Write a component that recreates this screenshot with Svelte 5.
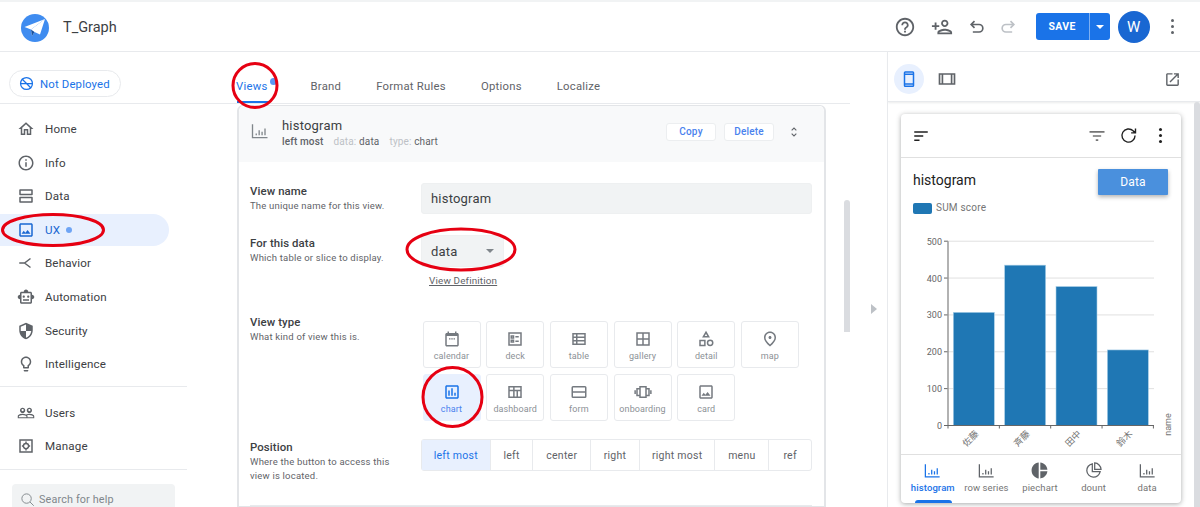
<script>
  const filled = {
    home: "M12 5.69l5 4.5V18h-2v-6H9v6H7v-7.81l5-4.5M12 3L2 12h3v8h6v-6h2v6h6v-8h3L12 3z",
    info: "M11 7h2v2h-2zm0 4h2v6h-2zm1-9C6.48 2 2 6.48 2 12s4.48 10 10 10 10-4.48 10-10S17.52 2 12 2zm0 18c-4.41 0-8-3.59-8-8s3.59-8 8-8 8 3.59 8 8-3.59 8-8 8z",
    data: "M20 13H4c-.55 0-1 .45-1 1v6c0 .55.45 1 1 1h16c.55 0 1-.45 1-1v-6c0-.55-.45-1-1-1zm-1 6H5v-4h14v4zM20 3H4c-.55 0-1 .45-1 1v6c0 .55.45 1 1 1h16c.55 0 1-.45 1-1V4c0-.55-.45-1-1-1zm-1 6H5V5h14v4z",
    image: "M19 5v14H5V5h14m0-2H5c-1.1 0-2 .9-2 2v14c0 1.1.9 2 2 2h14c1.1 0 2-.9 2-2V5c0-1.1-.9-2-2-2zm-4.86 8.86l-3 3.87L9 13.14 6 17h12l-3.86-5.14z",
    robot: "M20 9V7c0-1.1-.9-2-2-2h-3c0-1.66-1.34-3-3-3S9 3.34 9 5H6c-1.1 0-2 .9-2 2v2c-1.66 0-3 1.34-3 3s1.34 3 3 3v4c0 1.1.9 2 2 2h12c1.1 0 2-.9 2-2v-4c1.66 0 3-1.34 3-3s-1.34-3-3-3zm-2 10H6V7h12v12zm-9-6c-.83 0-1.5-.67-1.5-1.5S8.17 10 9 10s1.5.67 1.5 1.5S9.83 13 9 13zm7.5-1.5c0 .83-.67 1.5-1.5 1.5s-1.5-.67-1.5-1.5.67-1.5 1.5-1.5 1.5.67 1.5 1.5zM8 15h8v2H8v-2z",
    shield: "M12 1L3 5v6c0 5.55 3.84 10.74 9 12 5.16-1.26 9-6.45 9-12V5l-9-4zm0 10.99h7c-.53 4.12-3.28 7.79-7 8.94V12H5V6.3l7-3.11v8.8z",
    bulb: "M9 21c0 .55.45 1 1 1h4c.55 0 1-.45 1-1v-1H9v1zm3-19C8.14 2 5 5.14 5 9c0 2.38 1.19 4.47 3 5.74V17c0 .55.45 1 1 1h6c.55 0 1-.45 1-1v-2.26c1.81-1.27 3-3.36 3-5.74 0-3.86-3.14-7-7-7zm2.85 11.1l-.85.6V16h-4v-2.3l-.85-.6C7.8 12.16 7 10.63 7 9c0-2.76 2.24-5 5-5s5 2.24 5 5c0 1.63-.8 3.16-2.15 4.1z",
    users: "M16.5 13c-1.2 0-3.07.34-4.5 1-1.43-.67-3.3-1-4.5-1C5.33 13 1 14.08 1 16.25V19h22v-2.75c0-2.17-4.33-3.25-6.5-3.25zm-4 4.5h-10v-1.25c0-.54 2.56-1.75 5-1.75s5 1.21 5 1.75v1.25zm9 0H14v-1.25c0-.46-.2-.86-.52-1.22.88-.3 1.96-.53 3.02-.53 2.44 0 5 1.21 5 1.75v1.25zM7.5 12c1.93 0 3.5-1.57 3.5-3.5S9.43 5 7.5 5 4 6.57 4 8.5 5.57 12 7.5 12zm0-5.5c.83 0 1.5.67 1.5 1.5s-.67 1.5-1.5 1.5S6 8.83 6 8s.67-1.5 1.5-1.5zm9 5.5c1.93 0 3.5-1.57 3.5-3.5S18.43 5 16.5 5 13 6.57 13 8.5s1.57 3.5 3.5 3.5zm0-5.5c.83 0 1.5.67 1.5 1.5s-.67 1.5-1.5 1.5S15 8.83 15 8s.67-1.5 1.5-1.5z",
    help: "M11 18h2v-2h-2v2zm1-16C6.48 2 2 6.48 2 12s4.48 10 10 10 10-4.48 10-10S17.52 2 12 2zm0 18c-4.41 0-8-3.59-8-8s3.59-8 8-8 8 3.59 8 8-3.59 8-8 8zm0-14c-2.21 0-4 1.79-4 4h2c0-1.1.9-2 2-2s2 .9 2 2c0 2-3 1.75-3 5h2c0-2.25 3-2.5 3-5 0-2.21-1.79-4-4-4z",
    personadd: "M15 12c2.21 0 4-1.79 4-4s-1.79-4-4-4-4 1.79-4 4 1.79 4 4 4zm0-6c1.1 0 2 .9 2 2s-.9 2-2 2-2-.9-2-2 .9-2 2-2zm0 8c-2.67 0-8 1.34-8 4v2h16v-2c0-2.66-5.33-4-8-4zm-6 4c.22-.72 3.31-2 6-2 2.7 0 5.8 1.29 6 2H9zm-3-3v-3h3v-2H6V7H4v3H1v2h3v3z",
    chart: "M19 3H5c-1.1 0-2 .9-2 2v14c0 1.1.9 2 2 2h14c1.1 0 2-.9 2-2V5c0-1.1-.9-2-2-2zm0 16H5V5h14v14zM7 10h2v7H7zm4-3h2v10h-2zm4 6h2v4h-2z",
    map: "M12 12c-1.1 0-2-.9-2-2s.9-2 2-2 2 .9 2 2-.9 2-2 2zm6-1.8C18 6.57 15.35 4 12 4s-6 2.57-6 6.2c0 2.34 1.95 5.44 6 9.14 4.05-3.7 6-6.8 6-9.14zM12 2c4.2 0 8 3.22 8 8.2 0 3.32-2.67 7.25-8 11.8-5.33-4.55-8-8.48-8-11.8C4 5.22 7.8 2 12 2z",
    pie: "M11 2v20c-5.07-.5-9-4.79-9-10s3.93-9.5 9-10zm2.03 0v8.99H22c-.47-4.74-4.24-8.52-8.97-8.99zm0 11.01V22c4.74-.47 8.5-4.25 8.97-8.99h-8.97z",
    calendar: "M19 4h-1V2h-2v2H8V2H6v2H5c-1.1 0-2 .9-2 2v14c0 1.1.9 2 2 2h14c1.1 0 2-.9 2-2V6c0-1.1-.9-2-2-2zm0 16H5V8h14v12zM8 11h2v1.5H8zm3 0h2v1.5h-2zm3 0h2v1.5h-2z",
    external: "M19 19H5V5h7V3H5c-1.11 0-2 .9-2 2v14c0 1.1.89 2 2 2h14c1.1 0 2-.9 2-2v-7h-2v7zM14 3v2h3.59l-9.83 9.83 1.41 1.41L19 6.41V10h2V3h-7z"
  }

  const lined = {
    behavior: "M3 12h7l8-6M10 12l8 6",
    manage: "M4 4h16v16H4zM12 8.5a3.5 3.5 0 1 0 0 7 3.5 3.5 0 0 0 0-7zM12 6v2M12 16v2M6.5 12h2M15.5 12h2",
    undo: "M9 5L5 9l4 4M5 9h9.5a4.5 4.5 0 0 1 0 9H7",
    redo: "M15 5l4 4-4 4M19 9H9.5a4.5 4.5 0 0 0 0 9H17",
    deck: "M4 4h16v16H4zM7 8h3v2.5H7zM7 13.5h3V16H7zM12.5 9H17M12.5 15H17",
    table: "M4 5h16v14H4zM9 5v14M4 9.7h16M4 14.3h16",
    gallery: "M4 4h16v16H4zM12 4v16M4 12h16",
    detail: "M12 3l3.5 6h-7zM4 14h6.5v6.5H4zM17.5 13.5a3.5 3.5 0 1 0 0 7 3.5 3.5 0 0 0 0-7z",
    dashboard: "M4 5h16v14H4zM4 10h16M10.5 5v14M15 10v9",
    form: "M4 5h16a1 1 0 0 1 1 1v12a1 1 0 0 1-1 1H4a1 1 0 0 1-1-1V6a1 1 0 0 1 1-1zM3 12h18",
    onboarding: "M8 5h8v14H8zM4 7.5h4v9H4zM16 7.5h4v9h-4zM1.5 9.5v5M22.5 9.5v5",
    hist: "M3 4v16h18M7.5 17v-2M11 17V11M14.5 17v-4M18 17V9",
    unfold: "M8.5 9.5L12 6l3.5 3.5M8.5 14.5L12 18l3.5-3.5",
    phone: "M7 2.5h10a1 1 0 0 1 1 1v17a1 1 0 0 1-1 1H7a1 1 0 0 1-1-1v-17a1 1 0 0 1 1-1zM6 5.5h12M6 18.5h12",
    tablet: "M3 6h18v12H3zM6.5 6v12M17.5 6v12",
    sort: "M3 6.5h18M3 12h12M3 17.5h7",
    filter: "M3 7h18M7 12h10M10.5 17h3",
    refresh: "M19.5 12a7.5 7.5 0 1 1-2.2-5.3L20 9M20 4v5h-5",
    dount: "M10.5 3.5a8.5 8.5 0 1 0 9.9 9.9h-9.9zM13.5 2.5a8.5 8.5 0 0 1 8 8h-8z"
  }

  const nav = [
    { label: "Home", icon: "home" },
    { label: "Info", icon: "info" },
    { label: "Data", icon: "data" },
    { label: "UX", icon: "image", active: true },
    { label: "Behavior", icon: "behavior" },
    { label: "Automation", icon: "robot" },
    { label: "Security", icon: "shield" },
    { label: "Intelligence", icon: "bulb" }
  ]
  const tabs = ["Views", "Brand", "Format Rules", "Options", "Localize"]
  const viewTypes = [
    ["calendar", "calendar"], ["deck", "deck"], ["table", "table"], ["gallery", "gallery"], ["detail", "detail"], ["map", "map"],
    ["chart", "chart"], ["dashboard", "dashboard"], ["form", "form"], ["onboarding", "onboarding"], ["card", "image"]
  ]
  const positions = [
    ["left most", 69], ["left", 43], ["center", 58], ["right", 49], ["right most", 76], ["menu", 54], ["ref", 42]
  ]
  const ticks = [0, 100, 200, 300, 400, 500]
  const bars = [
    { name: "佐藤", score: 307 },
    { name: "斉藤", score: 435 },
    { name: "田中", score: 377 },
    { name: "鈴木", score: 205 }
  ]
  const bottomTabs = [
    ["histogram", "hist"], ["row series", "hist"], ["piechart", "pie"], ["dount", "dount"], ["data", "hist"]
  ]

  // chart box, coordinates local to the svg
  const y0 = 193.5
  const unit = 184.3 / 500
  const axisX = 47
</script>

{#snippet icon(name, size = 20)}
  <svg class="ic" width={size} height={size} viewBox="0 0 24 24" aria-hidden="true">
    {#if filled[name]}<path d={filled[name]} fill-rule="evenodd" />{/if}
    {#if lined[name]}<path class="line" d={lined[name]} />{/if}
  </svg>
{/snippet}

<div class="page">
  <header>
    <svg class="logo" width="28" height="28" viewBox="0 0 28 28">
      <circle cx="14" cy="14" r="14" fill="#3f8cf0" />
      <path d="M24 5L3.5 13l6.5 2.5z" fill="#fff" />
      <path d="M24 5L10 15.5l1 6.5 2.5-4 5.5 2.5z" fill="#fff" />
      <path d="M10 15.5l1 6.5 2.5-4z" fill="#17509e" />
    </svg>
    <span class="title">T_Graph</span>
    <div class="actions">
      <span class="act">{@render icon("help", 22)}</span>
      <span class="act add">{@render icon("personadd", 22)}</span>
      <span class="act undo">{@render icon("undo", 20)}</span>
      <span class="act off">{@render icon("redo", 20)}</span>
      <div class="save">
        <span class="save-main">SAVE</span>
        <span class="save-drop"><i></i></span>
      </div>
      <span class="avatar">W</span>
      <span class="dots"><i></i><i></i><i></i></span>
    </div>
  </header>

  <div class="body">
    <aside>
      <div class="deploy-row">
        <div class="pill">
          <svg width="15" height="15" viewBox="0 0 24 24" class="pill-ic">
            <circle cx="12" cy="12" r="9.5" />
            <path d="M4.5 4.5l15 15M2 12h20" />
          </svg>
          Not Deployed
        </div>
      </div>
      <nav class="group first">
        {#each nav as item}
          <div class="nav-item" class:active={item.active}>
            <span class="nav-ic">{@render icon(item.icon, 18)}</span>
            <span>{item.label}</span>
            {#if item.active}<i class="dot"></i>{/if}
          </div>
        {/each}
      </nav>
      <nav class="group second">
        <div class="nav-item"><span class="nav-ic">{@render icon("users", 18)}</span><span>Users</span></div>
        <div class="nav-item"><span class="nav-ic">{@render icon("manage", 18)}</span><span>Manage</span></div>
      </nav>
      <div class="search">
        <svg width="15" height="15" viewBox="0 0 24 24" class="search-ic">
          <circle cx="10.5" cy="10.5" r="7.5" />
          <path d="M16 16l6 6" />
        </svg>
        Search for help
      </div>
    </aside>

    <main>
      <div class="tabs">
        {#each tabs as tab, i}
          <div class="tab" class:current={i == 0}>
            {tab}
            {#if i == 0}<i class="tab-dot"></i>{/if}
          </div>
        {/each}
      </div>

      <section class="card">
        <div class="card-head">
          <span class="head-ic">{@render icon("hist", 20)}</span>
          <div class="head-text">
            <div class="head-title">histogram</div>
            <div class="head-sub">
              <b>left most</b>
              <span><em>data:</em> data</span>
              <span><em>type:</em> chart</span>
            </div>
          </div>
          <button class="mini">Copy</button>
          <button class="mini">Delete</button>
          <span class="unfold">{@render icon("unfold", 16)}</span>
        </div>

        <div class="form">
          <div class="row">
            <div class="name-text">
              <div class="label">View name</div>
              <div class="desc">The unique name for this view.</div>
            </div>
            <div class="input">histogram</div>
          </div>

          <div class="row data-row">
            <div class="data-text">
              <div class="label">For this data</div>
              <div class="desc">Which table or slice to display.</div>
            </div>
            <div>
              <div class="input select">data<i></i></div>
              <div class="link">View Definition</div>
            </div>
          </div>

          <div class="row type-row">
            <div>
              <div class="label">View type</div>
              <div class="desc">What kind of view this is.</div>
            </div>
            <div class="types">
              {#each viewTypes as [name, ic]}
                <div class="type" class:sel={name == "chart"}>
                  {@render icon(ic, 18)}
                  <span>{name}</span>
                </div>
              {/each}
            </div>
          </div>

          <div class="row pos-row">
            <div class="pos-text">
              <div class="label">Position</div>
              <div class="desc">Where the button to access this<br />view is located.</div>
            </div>
            <div class="segs">
              {#each positions as [name, w], i}
                <div class="seg" class:on={i == 0} style="width: {w}px">{name}</div>
              {/each}
            </div>
          </div>
          <div class="rule"></div>
        </div>
      </section>

      <div class="scroll"></div>
      <i class="split-arrow"></i>
    </main>

    <div class="right">
      <div class="toolbar">
        <span class="device on">{@render icon("phone", 18)}</span>
        <span class="device">{@render icon("tablet", 20)}</span>
        <span class="ext">{@render icon("external", 17)}</span>
      </div>
      <div class="stage">
        <div class="phone">
          <div class="phone-bar">
            <span class="sort">{@render icon("sort", 18)}</span>
            <span class="filter">{@render icon("filter", 20)}</span>
            <span class="refresh">{@render icon("refresh", 21)}</span>
            <span class="dots dark"><i></i><i></i><i></i></span>
          </div>
          <div class="phone-body">
            <div class="phone-top">
              <div class="phone-title">histogram</div>
              <div class="data-btn">Data</div>
            </div>
            <div class="legend"><i></i>SUM score</div>
            <svg class="chart" width="280" height="222" viewBox="0 0 280 222">
              {#each ticks as t}
                <line class="grid" x1={axisX} x2="253" y1={y0 - t * unit} y2={y0 - t * unit} />
                <line class="axis" x1={axisX - 4} x2={axisX} y1={y0 - t * unit} y2={y0 - t * unit} />
                <text class="tick" x={axisX - 6} y={y0 - t * unit + 3.5} text-anchor="end">{t}</text>
              {/each}
              {#each bars as b, i}
                <rect x={52.3 + i * 51.35} y={y0 - b.score * unit} width="41" height={b.score * unit} fill="#1f77b4" stroke="#a9cfe8" stroke-width="0.6" />
                <line class="axis" x1={axisX + i * 51.35} x2={axisX + i * 51.35} y1={y0} y2={y0 + 3} />
                <text class="cat" text-anchor="end" transform="translate({78 + i * 51.35} {y0 + 9}) rotate(-45)">{b.name}</text>
              {/each}
              <line class="axis" x1={axisX + 205.4} x2={axisX + 205.4} y1={y0} y2={y0 + 3} />
              <line class="axis strong" x1={axisX} x2={axisX} y1={y0 - 184.3} y2={y0} />
              <line class="axis" x1={axisX - 4} x2="253" y1={y0} y2={y0} />
              <text class="cat" text-anchor="middle" transform="translate(270 {y0 - 1}) rotate(-90)">name</text>
            </svg>
          </div>
          <div class="phone-tabs">
            {#each bottomTabs as [name, ic], i}
              <div class="ptab" class:on={i == 0}>
                {@render icon(ic, 19)}
                <span>{name}</span>
                {#if i == 0}<i></i>{/if}
              </div>
            {/each}
          </div>
        </div>
        <div class="stage-scroll"></div>
      </div>
    </div>
  </div>

  <!-- hand drawn red marks over the screenshot -->
  <svg class="marks" width="1200" height="507" viewBox="0 0 1200 507">
    <ellipse cx="255" cy="85.5" rx="22" ry="22" />
    <ellipse cx="53" cy="230" rx="50.5" ry="15.5" />
    <ellipse cx="461" cy="249.5" rx="54" ry="20.5" />
    <ellipse cx="452.5" cy="397" rx="29.5" ry="29.5" />
  </svg>
</div>

<style>
  :global(body) {
    margin: 0;
    background: #fff;
  }
  .page {
    position: relative;
    width: 1200px;
    height: 507px;
    overflow: hidden;
    display: flex;
    flex-direction: column;
    font-family: Roboto, "Noto Sans CJK JP", sans-serif;
    color: #3c4043;
    border-top: 2px solid #f1f3f4;
    box-sizing: border-box;
  }
  i, em {
    font-style: normal;
  }
  .ic {
    display: block;
    fill: currentColor;
  }
  .ic .line {
    fill: none;
    stroke: currentColor;
    stroke-width: var(--sw, 2);
  }

  header {
    height: 49px;
    flex: none;
    display: flex;
    align-items: center;
    padding-left: 21px;
    border-bottom: 1px solid #e8eaed;
  }
  .logo {
    display: block;
    margin-top: 2px;
  }
  .title {
    margin-left: 14px;
    margin-top: 2px;
    font-size: 14.5px;
    color: #3c4043;
  }
  .actions {
    margin-left: auto;
    display: flex;
    align-items: center;
    padding-right: 26px;
    color: #5f6368;
  }
  .act {
    width: 24px;
    display: flex;
    justify-content: center;
    margin-right: 13px;
  }
  .act.add {
    margin-right: 11px;
  }
  .act.undo {
    margin-right: 7px;
  }
  .act.off {
    color: #bdc1c6;
    margin-right: 16px;
  }
  .save {
    display: flex;
    height: 27px;
    width: 74px;
    border-radius: 3px;
    overflow: hidden;
    background: #1a73e8;
    color: #fff;
    font-size: 10.5px;
    font-weight: 700;
    letter-spacing: 0.3px;
  }
  .save-main {
    width: 53px;
    display: flex;
    align-items: center;
    justify-content: center;
    border-right: 1px solid #7fb0f2;
  }
  .save-drop {
    flex: 1;
    display: flex;
    align-items: center;
    justify-content: center;
  }
  .save-drop i {
    border: 4px solid transparent;
    border-top-color: #fff;
    border-bottom: 0;
  }
  .avatar {
    width: 32px;
    height: 32px;
    margin-left: 8px;
    border-radius: 50%;
    background: #1967d2;
    color: #fff;
    display: flex;
    align-items: center;
    justify-content: center;
    font-size: 15px;
  }
  .dots {
    display: flex;
    flex-direction: column;
    gap: 2.4px;
    margin-left: 21px;
  }
  .dots i {
    width: 3.4px;
    height: 3.4px;
    border-radius: 50%;
    background: #5f6368;
  }

  .body {
    flex: 1;
    display: flex;
    min-height: 0;
  }

  aside {
    width: 187px;
    flex: none;
    font-size: 11.6px;
    letter-spacing: 0.15px;
  }
  .deploy-row {
    height: 52px;
    padding: 18px 0 0 9px;
    box-sizing: border-box;
    border-bottom: 1px solid #e8eaed;
  }
  .pill {
    width: 112px;
    height: 27px;
    box-sizing: border-box;
    border: 1px solid #e8eaed;
    border-radius: 14px;
    display: flex;
    align-items: center;
    gap: 6px;
    padding-left: 9px;
    color: #1a73e8;
    font-size: 11.4px;
    white-space: nowrap;
  }
  .pill-ic, .search-ic {
    flex: none;
    fill: none;
    stroke: currentColor;
    stroke-width: 2;
  }
  .group {
    display: flex;
    flex-direction: column;
    gap: 1.6px;
    border-bottom: 1px solid #e8eaed;
  }
  .group.first {
    padding: 9px 0 6px;
  }
  .group.second {
    padding: 9.5px 0 7px;
  }
  .nav-item {
    width: 169px;
    height: 32px;
    box-sizing: border-box;
    display: flex;
    align-items: center;
    padding-left: 17px;
    border-radius: 0 16px 16px 0;
    color: #3c4043;
  }
  .nav-ic {
    width: 18px;
    margin-right: 10px;
    color: #5f6368;
  }
  .nav-item.active {
    background: #e8f0fe;
    color: #1967d2;
  }
  .active .nav-ic {
    color: #1967d2;
  }
  .dot {
    width: 6px;
    height: 6px;
    margin-left: 6px;
    border-radius: 50%;
    background: #6ea4f5;
  }
  .search {
    margin: 14px 0 0 12px;
    width: 163px;
    height: 40px;
    box-sizing: border-box;
    background: #f1f3f4;
    border-radius: 4px;
    display: flex;
    align-items: flex-start;
    gap: 4px;
    padding: 8px 0 0 8px;
    color: #80868b;
    font-size: 10.8px;
    line-height: 15px;
  }
  .search-ic {
    stroke-width: 1.5;
  }

  main {
    position: relative;
    flex: none;
    width: 701px;
    border-right: 1px solid #e8eaed;
    box-sizing: border-box;
    overflow: hidden;
  }
  .tabs {
    padding: 18px 0 0 49px;
    height: 52px;
    box-sizing: border-box;
    width: 663px;
    display: flex;
    gap: 35px;
    align-items: center;
    border-bottom: 1px solid #e8eaed;
    font-size: 11.3px;
    letter-spacing: 0.25px;
    color: #5f6368;
  }
  .tab {
    position: relative;
  }
  .tab.current {
    color: #1a73e8;
    margin-right: 8px;
  }
  .tab.current::after {
    content: "";
    position: absolute;
    left: 1px;
    right: -1px;
    bottom: -10px;
    height: 2px;
    background: #1a73e8;
  }
  .tab-dot {
    position: absolute;
    right: -9px;
    top: -2px;
    width: 7px;
    height: 7px;
    border-radius: 50%;
    background: #5b96f2;
  }
  .card {
    margin: 1px 0 0 50px;
    width: 589px;
    box-sizing: border-box;
    border: 1px solid #e3e5e8;
    border-left-width: 2px;
    border-right-width: 2px;
    border-radius: 6px 6px 0 0;
  }
  .card-head {
    height: 56px;
    background: #f8f9fa;
    display: flex;
    align-items: center;
    padding: 0 22px 2px 11px;
    box-sizing: border-box;
    gap: 8px;
    border-radius: 6px 6px 0 0;
    --sw: 1.6;
  }
  .head-ic {
    color: #80868b;
    margin: -4px 4px 0 0;
  }
  .head-text {
    flex: 1;
  }
  .head-title {
    font-size: 13px;
    line-height: 17px;
    color: #3c4043;
    letter-spacing: 0.2px;
  }
  .head-sub {
    font-size: 10px;
    line-height: 14px;
    margin-top: 1px;
    display: flex;
    gap: 10px;
    color: #5f6368;
    letter-spacing: 0.15px;
  }
  .head-sub b {
    font-weight: 500;
  }
  .head-sub em {
    color: #bdc1c6;
  }
  .mini {
    width: 50px;
    height: 18px;
    margin-top: -3px;
    padding: 0;
    border: 1px solid #eceef0;
    border-radius: 3px;
    background: #fff;
    color: #4a82ee;
    font: 500 10px Roboto, sans-serif;
    letter-spacing: 0.2px;
  }
  .unfold {
    color: #5f6368;
    margin: -3px 0 0 4px;
  }
  .form {
    padding: 21px 0 0 11px;
  }
  .row {
    display: grid;
    grid-template-columns: 171px 391px;
  }
  .label {
    font-size: 11.4px;
    line-height: 15px;
    font-weight: 500;
    color: #3c4043;
    letter-spacing: 0.1px;
  }
  .desc {
    font-size: 9.5px;
    line-height: 14px;
    color: #5f6368;
    letter-spacing: 0.2px;
  }
  .name-text, .data-text, .pos-text {
    padding-top: 1px;
  }
  .input {
    height: 31px;
    box-sizing: border-box;
    background: #f1f3f4;
    border-radius: 3px;
    border: 1px solid #eef0f1;
    padding-left: 9px;
    display: flex;
    align-items: center;
    font-size: 13px;
    letter-spacing: 0.2px;
    color: #3c4043;
  }
  .data-row {
    margin-top: 21px;
  }
  .select {
    width: 83px;
    height: 32px;
    position: relative;
  }
  .select i {
    position: absolute;
    right: 9px;
    top: 13px;
    border: 4px solid transparent;
    border-top-color: #80868b;
    border-bottom: 0;
  }
  .link {
    margin: 7px 0 0 8px;
    font-size: 9.9px;
    line-height: 14px;
    letter-spacing: 0.15px;
    color: #5f6368;
    text-decoration: underline;
  }
  .type-row {
    margin-top: 26.5px;
  }
  .types {
    display: grid;
    grid-template-columns: repeat(6, 58px);
    column-gap: 5.7px;
    row-gap: 6px;
    padding: 6.5px 0 0 1.5px;
  }
  .type {
    height: 47px;
    box-sizing: border-box;
    border: 1px solid #e8eaed;
    border-radius: 3px;
    display: flex;
    flex-direction: column;
    align-items: center;
    padding-top: 8px;
    color: #757a80;
  }
  .type span {
    font-size: 9px;
    line-height: 13px;
    margin-top: 2px;
    color: #8c9196;
    letter-spacing: 0.1px;
  }
  .type.sel {
    background: #e8f0fe;
    border-color: #e8f0fe;
    color: #1a73e8;
  }
  .type.sel span {
    color: #4a82ee;
  }
  .pos-row {
    margin-top: 18px;
  }
  .segs {
    display: flex;
    height: 32px;
    box-sizing: border-box;
    border: 1px solid #e8eaed;
    border-radius: 3px;
  }
  .seg {
    box-sizing: border-box;
    border-right: 1px solid #e8eaed;
    display: flex;
    align-items: center;
    justify-content: center;
    font-size: 10.5px;
    letter-spacing: 0.25px;
    color: #5f6368;
  }
  .seg:last-child {
    border-right: 0;
  }
  .seg.on {
    background: #e8f0fe;
    color: #1a73e8;
  }
  .rule {
    width: 562px;
    margin-top: 22px;
    border-top: 1px solid #e8eaed;
  }
  .scroll {
    position: absolute;
    left: 657px;
    top: 148px;
    width: 6px;
    height: 132px;
    background: #dadce0;
    border-radius: 3px 3px 0 0;
  }
  .split-arrow {
    position: absolute;
    left: 684px;
    top: 252px;
    border: 5px solid transparent;
    border-left: 6px solid #bdc1c6;
    border-right: 0;
  }

  .right {
    flex: 1;
    min-width: 0;
    display: flex;
    flex-direction: column;
  }
  .toolbar {
    height: 50px;
    flex: none;
    box-sizing: border-box;
    display: flex;
    align-items: center;
    padding: 5px 19px 0 6px;
    border-bottom: 1px solid #e8eaed;
    box-shadow: 0 1px 2px rgba(60, 64, 67, 0.1);
    color: #5f6368;
  }
  .device {
    width: 30px;
    height: 30px;
    border-radius: 50%;
    display: flex;
    align-items: center;
    justify-content: center;
    margin-right: 8px;
  }
  .device.on {
    background: #e8f0fe;
    color: #1a73e8;
  }
  .ext {
    margin-left: auto;
  }
  .stage {
    flex: 1;
    min-height: 0;
    display: flex;
    justify-content: space-between;
    padding-left: 13px;
  }
  .stage-scroll {
    width: 6px;
    background: #dadce0;
    border-radius: 3px 3px 0 0;
  }
  .phone {
    width: 280px;
    height: 389px;
    margin-top: 12px;
    border-radius: 4px;
    box-shadow: 0 1px 5px rgba(60, 64, 67, 0.45);
    display: flex;
    flex-direction: column;
    overflow: hidden;
    background: #fff;
  }
  .phone-bar {
    height: 44px;
    flex: none;
    box-sizing: border-box;
    display: flex;
    align-items: center;
    border-bottom: 1px solid #e0e0e0;
    padding: 0 19px 0 11px;
    color: #212121;
  }
  .filter {
    margin-left: auto;
    color: #757575;
  }
  .refresh {
    margin-left: 11px;
    --sw: 1.6;
  }
  .dots.dark {
    margin-left: 20px;
  }
  .dots.dark i {
    background: #212121;
  }
  .phone-body {
    flex: 1;
    min-height: 0;
  }
  .phone-top {
    display: flex;
    justify-content: space-between;
    padding: 11px 13px 0 12px;
    height: 38px;
    box-sizing: border-box;
  }
  .phone-title {
    font-size: 14px;
    line-height: 22px;
    color: #212121;
  }
  .data-btn {
    width: 70px;
    height: 26px;
    background: #4a90dd;
    color: #fff;
    border-radius: 1px;
    display: flex;
    align-items: center;
    justify-content: center;
    font-size: 12px;
    letter-spacing: 0.2px;
    box-shadow: 0 2px 4px rgba(0, 0, 0, 0.3);
  }
  .legend {
    display: flex;
    align-items: center;
    gap: 4px;
    padding-left: 12px;
    margin-top: 6px;
    font-size: 10px;
    line-height: 12px;
    letter-spacing: 0.2px;
    color: #757575;
  }
  .legend i {
    width: 19px;
    height: 11px;
    border-radius: 2px;
    background: #1f77b4;
  }
  .chart {
    display: block;
    margin-top: 17.8px;
  }
  .grid {
    stroke: #e0e0e0;
    stroke-width: 1;
  }
  .axis {
    stroke: #666;
    stroke-width: 1;
  }
  .axis.strong {
    stroke: #999;
    stroke-width: 1.5;
  }
  .tick {
    font-size: 9px;
    fill: #666;
  }
  .cat {
    font-size: 9px;
    fill: #757575;
  }
  .phone-tabs {
    height: 49px;
    flex: none;
    box-sizing: border-box;
    border-top: 1px solid #e0e0e0;
    display: flex;
    padding: 6px 7px 0 5px;
    --sw: 1.6;
  }
  .ptab {
    position: relative;
    flex: 1;
    display: flex;
    flex-direction: column;
    align-items: center;
    color: #5f6368;
    font-size: 9.5px;
    line-height: 13px;
    letter-spacing: 0.1px;
  }
  .ptab span {
    margin-top: 1px;
    white-space: nowrap;
    color: #757575;
  }
  .ptab.on, .ptab.on span {
    color: #1a73e8;
    font-weight: 500;
  }
  .ptab i {
    position: absolute;
    left: 9px;
    right: 8px;
    bottom: 0;
    height: 3px;
    border-radius: 3px 3px 0 0;
    background: #1a73e8;
  }

  .marks {
    position: absolute;
    left: 0;
    top: -2px;
    pointer-events: none;
    fill: none;
    stroke: #e60012;
    stroke-width: 3;
  }
</style>
